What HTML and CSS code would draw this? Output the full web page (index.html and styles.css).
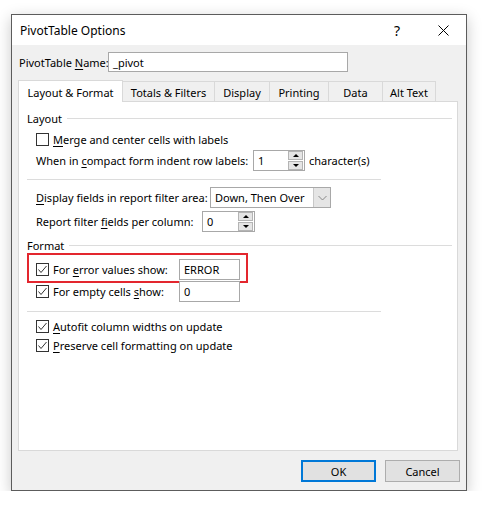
FILE: index.html
```html
<!DOCTYPE html>
<html lang="en">
<head>
    <meta charset="UTF-8">
    <meta name="viewport" content="width=device-width, initial-scale=1.0">
    <title>PivotTable Options</title>
    <link rel="stylesheet" href="styles.css">
</head>
<body>
    <div class="dialog">
        <!-- Title bar -->
        <div class="titlebar">
            <span class="title">PivotTable Options</span>
            <span class="title-btn help">?</span>
            <span class="title-btn close">
                <svg width="11" height="11" viewBox="0 0 11 11"><path d="M0.5 0.5 L10.5 10.5 M10.5 0.5 L0.5 10.5" stroke="#000" stroke-width="1" fill="none"/></svg>
            </span>
        </div>

        <div class="body">
            <!-- Name -->
            <div class="name-row">
                <span class="name-label">PivotTable <u>N</u>ame:</span>
                <div class="textbox name-box">_pivot</div>
            </div>

            <!-- Tabs -->
            <div class="tabs">
                <div class="tab active w-layout">Layout &amp; Format</div>
                <div class="tab w-totals">Totals &amp; Filters</div>
                <div class="tab w-display">Display</div>
                <div class="tab w-printing">Printing</div>
                <div class="tab w-data">Data</div>
                <div class="tab w-alt">Alt Text</div>
            </div>

            <div class="panel">
                <div class="group-head head-layout">
                    <span>Layout</span>
                    <div class="group-line"></div>
                </div>

                <div class="row row-merge">
                    <span class="checkbox"></span>
                    <span class="check-text"><u>M</u>erge and center cells with labels</span>
                </div>

                <div class="row row-indent">
                    <span class="label w-indent">When in <u>c</u>ompact form indent row labels:</span>
                    <div class="spinbox w-spin1">
                        <span class="spin-value">1</span>
                        <div class="spin-btns">
                            <span class="spin-btn"><span class="tri-up"></span></span>
                            <span class="spin-btn"><span class="tri-down"></span></span>
                        </div>
                    </div>
                    <span class="after">character(s)</span>
                </div>

                <div class="separator sep-1"></div>

                <div class="row row-display">
                    <span class="label w-display-label"><u>D</u>isplay fields in report filter area:</span>
                    <div class="dropdown">
                        <span class="dropdown-value">Down, Then Over</span>
                        <span class="dropdown-arrow">
                            <svg width="9" height="6" viewBox="0 0 9 6"><polyline points="0.5,1 4.5,5 8.5,1" stroke="#888" stroke-width="1" fill="none"/></svg>
                        </span>
                    </div>
                </div>

                <div class="row row-report">
                    <span class="label w-report">Report filter <u>f</u>ields per column:</span>
                    <div class="spinbox w-spin2">
                        <span class="spin-value">0</span>
                        <div class="spin-btns">
                            <span class="spin-btn"><span class="tri-up"></span></span>
                            <span class="spin-btn"><span class="tri-down"></span></span>
                        </div>
                    </div>
                </div>

                <div class="group-head head-format">
                    <span>Format</span>
                    <div class="group-line"></div>
                </div>

                <div class="row row-error">
                    <div class="check-label">
                        <span class="checkbox checked">
                            <svg width="11" height="11" viewBox="0 0 11 11"><polyline points="1.5,5.5 4,8.5 9.5,2" stroke="#333" stroke-width="1" fill="none"/></svg>
                        </span>
                        <span class="check-text">For <u>e</u>rror values show:</span>
                    </div>
                    <div class="textbox value-box">ERROR</div>
                    <div class="highlight"></div>
                </div>

                <div class="row row-empty">
                    <div class="check-label">
                        <span class="checkbox checked">
                            <svg width="11" height="11" viewBox="0 0 11 11"><polyline points="1.5,5.5 4,8.5 9.5,2" stroke="#333" stroke-width="1" fill="none"/></svg>
                        </span>
                        <span class="check-text">For empty cells <u>s</u>how:</span>
                    </div>
                    <div class="textbox value-box">0</div>
                </div>

                <div class="separator sep-2"></div>

                <div class="row row-autofit">
                    <span class="checkbox checked">
                        <svg width="11" height="11" viewBox="0 0 11 11"><polyline points="1.5,5.5 4,8.5 9.5,2" stroke="#333" stroke-width="1" fill="none"/></svg>
                    </span>
                    <span class="check-text"><u>A</u>utofit column widths on update</span>
                </div>

                <div class="row row-preserve">
                    <span class="checkbox checked">
                        <svg width="11" height="11" viewBox="0 0 11 11"><polyline points="1.5,5.5 4,8.5 9.5,2" stroke="#333" stroke-width="1" fill="none"/></svg>
                    </span>
                    <span class="check-text"><u>P</u>reserve cell formatting on update</span>
                </div>
            </div>

            <!-- Buttons -->
            <div class="buttons">
                <button class="btn btn-default">OK</button>
                <button class="btn">Cancel</button>
            </div>
        </div>
    </div>
</body>
</html>
```

FILE: styles.css
```css
/* Basic Reset */
* {
    margin: 0;
    padding: 0;
    box-sizing: border-box;
}

body {
    background: #fff;
    font-family: "Noto Sans", "Open Sans", sans-serif;
    font-size: 11px;
    color: #000;
    white-space: nowrap;
}

u {
    text-decoration: underline;
    text-underline-offset: 2px;
}

/* Dialog frame */
.dialog {
    width: 456px;
    height: 477px;
    margin: 14px 0 0 11px;
    border: 1px solid #5c5c5c;
    box-shadow: 0 4px 14px rgba(0, 0, 0, 0.22);
    display: flex;
    flex-direction: column;
    background: #f0f0f0;
}

/* Title bar */
.titlebar {
    height: 30px;
    background: #fff;
    display: flex;
    align-items: center;
}

.title {
    flex: 1;
    padding-left: 8px;
    font-size: 12px;
}

.title-btn {
    width: 46px;
    height: 30px;
    display: flex;
    align-items: center;
    justify-content: center;
}

.help {
    font-size: 14px;
}

/* Body */
.body {
    flex: 1;
    display: flex;
    flex-direction: column;
    padding: 7px 6px 0 6px;
}

.name-row {
    display: flex;
    align-items: center;
    height: 20px;
    padding-left: 1px;
}

.name-label {
    width: 89px;
    flex-shrink: 0;
}

.textbox {
    height: 20px;
    border: 1px solid #a8a8a8;
    background: #fff;
    padding-left: 4px;
    display: flex;
    align-items: center;
    flex-shrink: 0;
}

.name-box {
    width: 240px;
}

/* Tabs */
.tabs {
    display: flex;
    align-items: flex-end;
    height: 21px;
    margin-top: 8px;
}

.tab {
    height: 20px;
    border: 1px solid #d9d9d9;
    border-bottom: none;
    background: #f0f0f0;
    display: flex;
    align-items: center;
    justify-content: center;
    margin-left: -1px;
    padding-top: 2px;
}

.tab.active {
    height: 22px;
    margin-left: 0;
    margin-bottom: -1px;
    background: #fff;
    position: relative;
    z-index: 1;
    padding-top: 1px;
}

.w-layout { width: 105px; }
.w-totals { width: 93px; }
.w-display { width: 56px; }
.w-printing { width: 60px; }
.w-data { width: 55px; }
.w-alt { width: 54px; }

/* Tab panel */
.panel {
    width: 440px;
    height: 350px;
    border: 1px solid #d9d9d9;
    background: #fff;
    padding: 8px 5px 0 8px;
    display: flex;
    flex-direction: column;
}

.group-head {
    display: flex;
    align-items: center;
    gap: 5px;
    height: 16px;
}

.group-line {
    flex: 1;
    height: 1px;
    background: #dcdcdc;
}

.head-format {
    margin-top: 5px;
}

.row {
    display: flex;
    align-items: center;
    height: 21px;
    margin-left: 9px;
    position: relative;
}

.row-merge { margin-top: 3px; }
.row-display { margin-top: 7px; }
.row-report { margin-top: 3px; }
.row-error { margin-top: 6px; }
.row-empty { margin-top: 1px; }
.row-autofit { margin-top: 5px; height: 19px; }
.row-preserve { height: 19px; }

.separator {
    width: 354px;
    height: 1px;
    background: #dcdcdc;
}

.sep-1 { margin-top: 8px; }
.sep-2 { margin-top: 9px; }

/* Checkboxes */
.checkbox {
    width: 13px;
    height: 13px;
    border: 1px solid #333;
    background: #fff;
    margin-right: 4px;
    display: flex;
    flex-shrink: 0;
}

.check-label {
    width: 143px;
    display: flex;
    align-items: center;
    flex-shrink: 0;
}

.label {
    flex-shrink: 0;
}

.label.w-indent { width: 217px; }
.label.w-display-label { width: 174px; }
.label.w-report { width: 166px; }

/* Spin boxes */
.spinbox {
    height: 21px;
    border: 1px solid #a8a8a8;
    background: #fff;
    display: flex;
    align-items: center;
    justify-content: space-between;
    padding: 0 1px 0 4px;
    flex-shrink: 0;
}

.w-spin1 { width: 52px; }
.w-spin2 { width: 53px; }

.spin-btns {
    width: 15px;
    height: 19px;
    display: flex;
    flex-direction: column;
    gap: 1px;
}

.spin-btn {
    flex: 1;
    background: #e5e5e5;
    border: 1px solid #b4b4b4;
    display: flex;
    align-items: center;
    justify-content: center;
}

.tri-up {
    width: 0;
    height: 0;
    border-left: 3px solid transparent;
    border-right: 3px solid transparent;
    border-bottom: 3px solid #000;
}

.tri-down {
    width: 0;
    height: 0;
    border-left: 3px solid transparent;
    border-right: 3px solid transparent;
    border-top: 3px solid #000;
}

.after {
    margin-left: 4px;
}

/* Dropdown */
.dropdown {
    width: 121px;
    height: 21px;
    border: 1px solid #a8a8a8;
    background: #fff;
    display: flex;
    align-items: stretch;
    flex-shrink: 0;
}

.dropdown-value {
    flex: 1;
    padding-left: 4px;
    display: flex;
    align-items: center;
}

.dropdown-arrow {
    width: 17px;
    background: #e5e5e5;
    border-left: 1px solid #c8c8c8;
    display: flex;
    align-items: center;
    justify-content: center;
}

/* Format inputs */
.value-box {
    width: 61px;
    height: 21px;
}

/* Red annotation box */
.highlight {
    position: absolute;
    left: -9px;
    top: -6px;
    width: 221px;
    height: 30px;
    border: 2px solid #e3262e;
}

/* Buttons */
.buttons {
    display: flex;
    justify-content: flex-end;
    gap: 9px;
    margin-top: 9px;
}

.btn {
    width: 75px;
    height: 22px;
    border: 1px solid #adadad;
    background: #e1e1e1;
    font-family: inherit;
    font-size: 11px;
    color: #000;
}

.btn-default {
    border: 2px solid #0078d7;
}
```
